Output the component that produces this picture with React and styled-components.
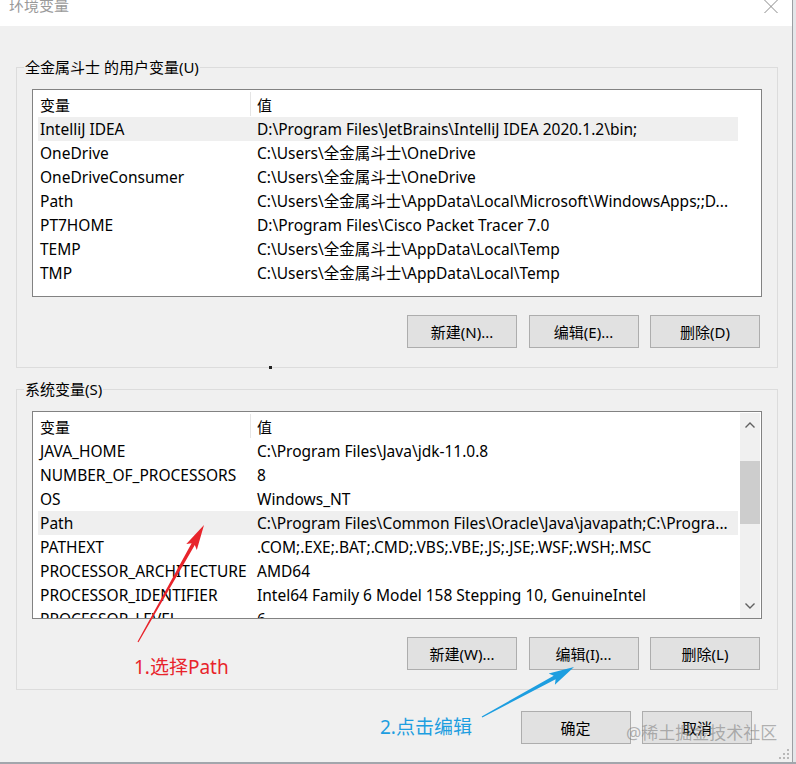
import React from "react";
import styled, { createGlobalStyle } from "styled-components";

const GlobalStyle = createGlobalStyle`
  html, body { margin: 0; padding: 0; background: #e4e6e9; }
  body { font-family: "Noto Sans", "Noto Sans CJK SC", sans-serif; }
  * { box-sizing: border-box; }
`;

const FONT = `"Noto Sans", "Noto Sans CJK SC", sans-serif`;

const Screen = styled.div`
  position: relative;
  width: 796px;
  height: 764px;
  overflow: hidden;
  display: flex;
  flex-direction: column;
  background: #e4e6e9;
`;

const Window = styled.div`
  width: 793px;
  height: 762px;
  display: flex;
  flex-direction: column;
  background: #f0f0f0;
  border-right: 1px solid #9c9fa3;
  position: relative;
`;

const BottomEdge = styled.div`
  height: 2px;
  width: 796px;
  background: #a2a6ac;
`;

const TitleBar = styled.div`
  height: 26px;
  flex: none;
  background: #ffffff;
  display: flex;
  justify-content: space-between;
  align-items: flex-start;
  padding: 0 14px 0 9px;
`;

const Title = styled.div`
  font-family: ${FONT};
  font-size: 15px;
  line-height: 13px;
  color: #9a9a9a;
  margin-top: -1px;
`;

const CloseIcon = styled.svg`
  width: 14px;
  height: 14px;
`;

const Body = styled.div`
  flex: 1;
  display: flex;
  flex-direction: column;
  padding: 31px 14px 0 16px;
`;

const Group = styled.fieldset`
  margin: ${(p) => (p.$first ? "0" : "11px 0 0 0")};
  padding: 0 15px 19px 15px;
  border: 1px solid #dcdcdc;
  min-width: 0;
`;

const Legend = styled.legend`
  font-family: ${FONT};
  font-size: 15px;
  line-height: 20px;
  color: #000;
  padding: 0 1px;
  margin-left: -8px;
`;

const ListBox = styled.div`
  margin-top: 12px;
  height: 208px;
  border: 1px solid #828282;
  background: #ffffff;
  display: flex;
  overflow: hidden;
`;

const ListContent = styled.div`
  flex: 1;
  min-width: 0;
  padding-left: 5px;
  margin-right: ${(p) => (p.$scroll ? "2px" : "23px")};
  display: flex;
  flex-direction: column;
`;

const HeaderRow = styled.div`
  height: 27px;
  flex: none;
  display: grid;
  grid-template-columns: 212px 1fr;
  padding: 2px 0 1px 0;
`;

const HeaderCell = styled.div`
  font-family: ${FONT};
  font-size: 15px;
  color: #000;
  display: flex;
  align-items: center;
  padding-left: ${(p) => (p.$second ? "6px" : "2px")};
  border-left: ${(p) => (p.$second ? "1px solid #e5e5e5" : "none")};
  white-space: nowrap;
`;

const Row = styled.div`
  height: 24px;
  flex: none;
  display: grid;
  grid-template-columns: 212px 1fr;
  align-items: start;
  background: ${(p) => (p.$selected ? "#efefef" : "transparent")};
`;

const Cell = styled.div`
  font-family: ${FONT};
  font-size: 15.5px;
  color: #000;
  white-space: nowrap;
  overflow: hidden;
  padding-left: ${(p) => (p.$second ? "7px" : "2px")};
  padding-top: 1px;
  line-height: 23px;
`;

const ScrollBar = styled.div`
  width: 20px;
  flex: none;
  margin: 1px 1px 0 0;
  background: #f0f0f0;
  display: flex;
  flex-direction: column;
`;

const ScrollArrow = styled.div`
  height: 24px;
  flex: none;
  display: flex;
  align-items: center;
  justify-content: center;
`;

const ScrollTrack = styled.div`
  flex: 1;
  padding-top: 24px;
`;

const ScrollThumb = styled.div`
  height: 63px;
  background: #cdcdcd;
`;

const ButtonRow = styled.div`
  display: flex;
  justify-content: flex-end;
  gap: 11.5px;
  margin-top: ${(p) => p.$mt || "18px"};
  margin-right: ${(p) => p.$mr || "2px"};
`;

const Button = styled.button`
  width: 110px;
  height: 33px;
  background: #e1e1e1;
  border: 1px solid #adadad;
  border-radius: 0;
  font-family: ${FONT};
  font-size: 15px;
  color: #000;
  padding: 0;
  display: flex;
  align-items: center;
  justify-content: center;
`;

const Overlay = styled.svg`
  position: absolute;
  left: 0;
  top: 0;
  width: 796px;
  height: 764px;
  pointer-events: none;
`;

const Note = styled.div`
  position: absolute;
  left: ${(p) => p.$x}px;
  top: ${(p) => p.$y}px;
  font-family: ${FONT};
  font-size: 19px;
  line-height: 24px;
  color: ${(p) => p.$color};
  white-space: nowrap;
  pointer-events: none;
`;

const Watermark = styled.div`
  position: absolute;
  left: 626px;
  top: 721px;
  font-family: ${FONT};
  font-size: 17px;
  line-height: 24px;
  color: rgba(120, 120, 120, 0.55);
  white-space: nowrap;
  pointer-events: none;
`;

const Grip = styled.svg`
  position: absolute;
  right: 2px;
  bottom: 2px;
  width: 12px;
  height: 12px;
`;

const Dot = styled.div`
  position: absolute;
  left: 269px;
  top: 366px;
  width: 3px;
  height: 3px;
  background: #222;
`;

const userVars = [
  ["IntelliJ IDEA", "D:\\Program Files\\JetBrains\\IntelliJ IDEA 2020.1.2\\bin;", true],
  ["OneDrive", "C:\\Users\\全金属斗士\\OneDrive"],
  ["OneDriveConsumer", "C:\\Users\\全金属斗士\\OneDrive"],
  ["Path", "C:\\Users\\全金属斗士\\AppData\\Local\\Microsoft\\WindowsApps;;D..."],
  ["PT7HOME", "D:\\Program Files\\Cisco Packet Tracer 7.0"],
  ["TEMP", "C:\\Users\\全金属斗士\\AppData\\Local\\Temp"],
  ["TMP", "C:\\Users\\全金属斗士\\AppData\\Local\\Temp"],
];

const sysVars = [
  ["JAVA_HOME", "C:\\Program Files\\Java\\jdk-11.0.8"],
  ["NUMBER_OF_PROCESSORS", "8"],
  ["OS", "Windows_NT"],
  ["Path", "C:\\Program Files\\Common Files\\Oracle\\Java\\javapath;C:\\Progra...", true],
  ["PATHEXT", ".COM;.EXE;.BAT;.CMD;.VBS;.VBE;.JS;.JSE;.WSF;.WSH;.MSC"],
  ["PROCESSOR_ARCHITECTURE", "AMD64"],
  ["PROCESSOR_IDENTIFIER", "Intel64 Family 6 Model 158 Stepping 10, GenuineIntel"],
  ["PROCESSOR_LEVEL", "6"],
];

function arrowPoints(x1, y1, x2, y2, headLen, headW, neckW, tailW) {
  const dx = x2 - x1;
  const dy = y2 - y1;
  const len = Math.hypot(dx, dy);
  const ux = dx / len;
  const uy = dy / len;
  const nx = -uy;
  const ny = ux;
  const bx = x2 - ux * headLen;
  const by = y2 - uy * headLen;
  const wx = x2 - ux * headLen * 1.15;
  const wy = y2 - uy * headLen * 1.15;
  const pts = [
    [x1 + nx * tailW, y1 + ny * tailW],
    [bx + nx * neckW, by + ny * neckW],
    [wx + nx * headW, wy + ny * headW],
    [x2, y2],
    [wx - nx * headW, wy - ny * headW],
    [bx - nx * neckW, by - ny * neckW],
    [x1 - nx * tailW, y1 - ny * tailW],
  ];
  return pts.map((p) => p[0].toFixed(1) + "," + p[1].toFixed(1)).join(" ");
}

function Chevron({ up }) {
  return (
    <svg width="12" height="8" viewBox="0 0 12 8">
      <polyline
        points={up ? "1.5,6.5 6,2 10.5,6.5" : "1.5,1.5 6,6 10.5,1.5"}
        fill="none"
        stroke="#606060"
        strokeWidth="1.4"
      />
    </svg>
  );
}

function VarList({ items, scroll }) {
  return (
    <ListBox>
      <ListContent $scroll={scroll}>
        <HeaderRow>
          <HeaderCell>变量</HeaderCell>
          <HeaderCell $second>值</HeaderCell>
        </HeaderRow>
        {items.map(([k, v, sel]) => (
          <Row key={k + v} $selected={sel}>
            <Cell>{k}</Cell>
            <Cell $second>{v}</Cell>
          </Row>
        ))}
      </ListContent>
      {scroll && (
        <ScrollBar>
          <ScrollArrow>
            <Chevron up />
          </ScrollArrow>
          <ScrollTrack>
            <ScrollThumb />
          </ScrollTrack>
          <ScrollArrow>
            <Chevron />
          </ScrollArrow>
        </ScrollBar>
      )}
    </ListBox>
  );
}

export default function App() {
  return (
    <>
      <GlobalStyle />
      <Screen>
        <Window>
          <TitleBar>
            <Title>环境变量</Title>
            <CloseIcon viewBox="0 0 14 14">
              <line x1="0.5" y1="0" x2="13.5" y2="13" stroke="#8a8a8a" strokeWidth="1" />
              <line x1="13.5" y1="0" x2="0.5" y2="13" stroke="#8a8a8a" strokeWidth="1" />
            </CloseIcon>
          </TitleBar>
          <Body>
            <Group $first>
              <Legend>全金属斗士 的用户变量(U)</Legend>
              <VarList items={userVars} />
              <ButtonRow>
                <Button>新建(N)...</Button>
                <Button>编辑(E)...</Button>
                <Button>删除(D)</Button>
              </ButtonRow>
            </Group>
            <Group>
              <Legend>系统变量(S)</Legend>
              <VarList items={sysVars} scroll />
              <ButtonRow>
                <Button>新建(W)...</Button>
                <Button>编辑(I)...</Button>
                <Button>删除(L)</Button>
              </ButtonRow>
            </Group>
            <ButtonRow $mt="21px" $mr="26px">
              <Button>确定</Button>
              <Button>取消</Button>
            </ButtonRow>
          </Body>
          <Grip viewBox="0 0 12 12">
            {[
              [10, 2], [10, 6], [6, 6], [10, 10], [6, 10], [2, 10],
            ].map(([x, y]) => (
              <rect key={x + "-" + y} x={x - 1} y={y - 1} width="2" height="2" fill="#b8b8b8" />
            ))}
          </Grip>
        </Window>
        <BottomEdge />
        <Dot />
        <Overlay viewBox="0 0 796 764">
          <polygon points={arrowPoints(138, 642, 204, 525, 22, 6, 1.8, 0.6)} fill="#e8242b" />
          <polygon points={arrowPoints(482, 717, 574, 667, 22, 6.5, 2, 0.6)} fill="#1d9ee0" />
        </Overlay>
        <Note $x={134} $y={655} $color="#e8242b">1.选择Path</Note>
        <Note $x={380} $y={715} $color="#1d9ee0">2.点击编辑</Note>
        <Watermark>@稀土掘金技术社区</Watermark>
      </Screen>
    </>
  );
}
